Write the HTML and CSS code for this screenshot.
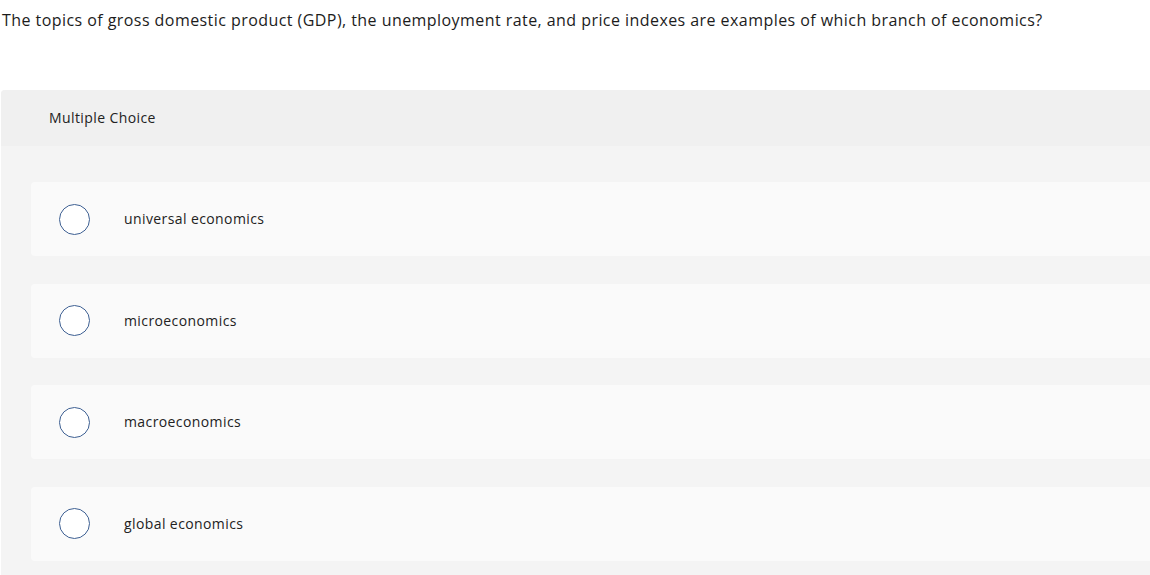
FILE: index.html
```html
<!DOCTYPE html>
<html>
<head>
<meta charset="utf-8">
<link rel="stylesheet" href="styles.css">
</head>
<body>
<div class="page">
  <p class="question">The topics of gross domestic product (GDP), the unemployment rate, and price indexes are examples of which branch of economics?</p>
  <div class="panel">
    <div class="panel-head">Multiple Choice</div>
    <div class="panel-body">
      <div class="option"><span class="radio"></span><span class="label">universal economics</span></div>
      <div class="option"><span class="radio"></span><span class="label">microeconomics</span></div>
      <div class="option"><span class="radio"></span><span class="label">macroeconomics</span></div>
      <div class="option"><span class="radio"></span><span class="label">global economics</span></div>
    </div>
  </div>
</div>
</body>
</html>
```
FILE: styles.css
```css
html, body { margin: 0; padding: 0; background: #fff; }
body { font-family: "Open Sans", sans-serif; color: #222; overflow: hidden; }
.page { width: 1150px; height: 575px; overflow: hidden; }
.question {
  margin: 0;
  padding: 10px 0 0 2px;
  font-size: 16px;
  letter-spacing: 0.44px;
  line-height: 20px;
  color: #1c1c1c;
  height: 90px;
  box-sizing: border-box;
}
.panel {
  margin-left: 1px;
  width: 1170px;
  border-radius: 4px;
  overflow: hidden;
  background: #f4f4f4;
}
.panel-head {
  background: #f0f0f0;
  height: 56px;
  box-sizing: border-box;
  padding: 0 0 1px 48px;
  display: flex;
  align-items: center;
  font-size: 14px;
  letter-spacing: 0.4px;
  color: #222;
}
.panel-body {
  padding: 36px 0 20px 30px;
  display: flex;
  flex-direction: column;
  gap: 27.67px;
}
.option {
  background: #fafafa;
  height: 74px;
  border-radius: 4px;
  display: flex;
  align-items: center;
  padding-left: 28px;
}
.radio {
  width: 29px;
  height: 29px;
  border: 1.5px solid #3d5f92;
  border-radius: 50%;
  background: #fff;
  flex: none;
}
.label {
  margin-left: 34px;
  margin-bottom: 1px;
  font-size: 14px;
  letter-spacing: 0.4px;
  color: #222;
}
```
